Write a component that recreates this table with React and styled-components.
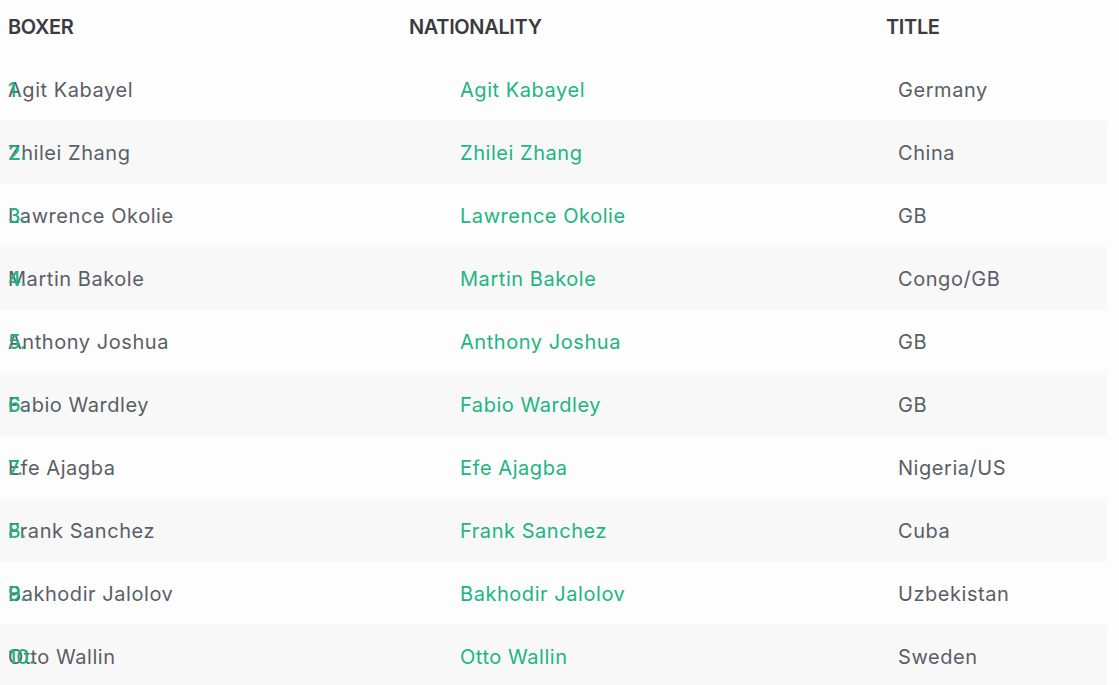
import React from "react";
import styled, { createGlobalStyle } from "styled-components";

const GlobalStyle = createGlobalStyle`
  html, body { margin: 0; padding: 0; background: #fdfdfd; }
  body { font-family: Inter, "Noto Sans", sans-serif; }
`;

const Table = styled.table`
  width: 1107px;
  border-collapse: collapse;
  table-layout: fixed;
`;

const HeadCell = styled.th`
  height: 54px;
  padding: 0 0 4px 8px;
  text-align: left;
  vertical-align: middle;
  font-size: 20px;
  font-weight: 600;
  letter-spacing: -0.35px;
  color: #3a3a3f;
  text-transform: uppercase;
`;

const Row = styled.tr`
  height: 63px;
  background: ${(p) => (p.$striped ? "#f8f8f8" : "transparent")};
`;

const Cell = styled.td`
  position: relative;
  padding: 0 0 0 ${(p) => p.$pad}px;
  font-size: 20px;
  font-weight: 400;
  letter-spacing: 0.55px;
  color: ${(p) => (p.$accent ? "#20b582" : "#5a5e66")};
  vertical-align: middle;
  white-space: nowrap;
`;

const Num = styled.span`
  position: absolute;
  left: 8px;
  top: 0;
  bottom: 0;
  display: flex;
  align-items: center;
  color: #1fb380;
  font-weight: 500;
  letter-spacing: 0;
  z-index: 1;
`;

const boxers = [
  ["Agit Kabayel", "Germany"],
  ["Zhilei Zhang", "China"],
  ["Lawrence Okolie", "GB"],
  ["Martin Bakole", "Congo/GB"],
  ["Anthony Joshua", "GB"],
  ["Fabio Wardley", "GB"],
  ["Efe Ajagba", "Nigeria/US"],
  ["Frank Sanchez", "Cuba"],
  ["Bakhodir Jalolov", "Uzbekistan"],
  ["Otto Wallin", "Sweden"],
];

export default function App() {
  return (
    <>
      <GlobalStyle />
      <Table>
        <colgroup>
          <col style={{ width: 401 }} />
          <col style={{ width: 477 }} />
          <col />
        </colgroup>
        <thead>
          <tr>
            <HeadCell>Boxer</HeadCell>
            <HeadCell>Nationality</HeadCell>
            <HeadCell>Title</HeadCell>
          </tr>
        </thead>
        <tbody>
          {boxers.map(([name, country], i) => (
            <Row key={name} $striped={i % 2 === 1}>
              <Cell $pad={8}>
                {name}
                <Num>{i + 1}.</Num>
              </Cell>
              <Cell $pad={59} $accent>
                {name}
              </Cell>
              <Cell $pad={20}>{country}</Cell>
            </Row>
          ))}
        </tbody>
      </Table>
    </>
  );
}
